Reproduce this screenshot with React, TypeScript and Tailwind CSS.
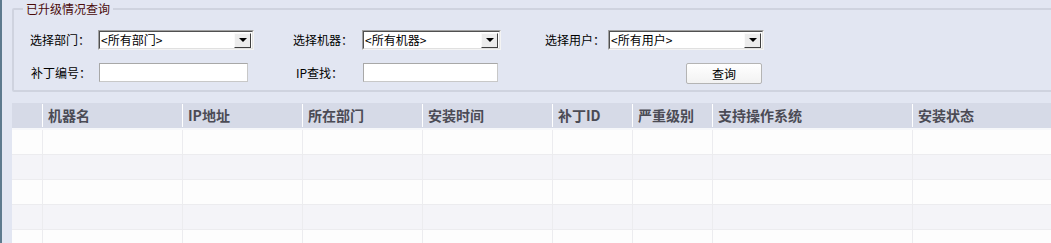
import React from "react";

const font = { fontFamily: '"Noto Sans CJK SC", "Noto Sans", sans-serif' };

function Select({ w, text }: { w: string; text: string }) {
  return (
    <div
      className={`${w} h-[20px] bg-white flex items-center border border-t-[#a0a0a0] border-l-[#a0a0a0] border-b-[#f4f4f4] border-r-[#f4f4f4]`}
    >
      <div className="flex-1 h-full flex items-center border border-t-[#505050] border-l-[#505050] border-b-[#e0e0e0] border-r-[#e0e0e0] pr-[1px]">
        <span className="flex-1 pl-[1px] text-[12px] leading-none text-black whitespace-nowrap">{text}</span>
        <div className="w-[17px] h-[15px] bg-[#ececec] flex items-center justify-center border border-t-[#fafafa] border-l-[#fafafa] border-b-[#404040] border-r-[#404040]">
          <div className="w-0 h-0 border-l-[4px] border-r-[4px] border-t-[4px] border-l-transparent border-r-transparent border-t-black" />
        </div>
      </div>
    </div>
  );
}

function Input({ w }: { w: string }) {
  return <div className={`${w} h-[19px] bg-white border border-[#a8a8a8] border-b-[#c8c8c8] border-r-[#c8c8c8]`} />;
}

const cols = ["", "机器名", "IP地址", "所在部门", "安装时间", "补丁ID", "严重级别", "支持操作系统", "安装状态"];

export default function App() {
  return (
    <div
      className="w-[1051px] h-[243px] bg-[#e2e6f2] border-l-2 border-[#5d7a8e] overflow-hidden"
      style={font}
    >
      <fieldset className="ml-[10px] w-[1045px] border-2 border-[#cfd3df] rounded-[2px] pb-[6px]">
        <legend className="ml-[9px] px-[3px] text-[12px] leading-[18px] text-[#4a0a0a]">已升级情况查询</legend>
        <div className="flex items-center mt-[12px] pl-[16px] text-[12px] text-black">
          <span className="w-[68px]">选择部门：</span>
          <Select w="w-[156px]" text="<所有部门>" />
          <span className="ml-[39px] w-[69px]">选择机器：</span>
          <Select w="w-[139px]" text="<所有机器>" />
          <span className="ml-[44px] w-[63px]">选择用户：</span>
          <Select w="w-[156px]" text="<所有用户>" />
        </div>
        <div className="flex items-start mt-[13px] pl-[16px] text-[12px] text-black">
          <span className="w-[69px] h-[19px] leading-[19px] pl-[1px]">补丁编号：</span>
          <Input w="w-[149px]" />
          <span className="ml-[48px] w-[67px] h-[19px] leading-[19px]">IP查找：</span>
          <Input w="w-[135px]" />
          <button className="ml-[188px] w-[76px] h-[21px] border border-[#b4b4b4] rounded-[2px] bg-gradient-to-b from-white to-[#f2f2f2] text-[12px] leading-none text-black">
            查询
          </button>
        </div>
      </fieldset>
      <div className="ml-[10px] mt-[11px]">
        <div className="grid grid-cols-[30px_140px_120px_120px_130px_80px_80px_200px_1fr] h-[27px] bg-[#d6dae7] border-b-2 border-[#f6f7fa]">
          {cols.map((c, i) => (
            <div
              key={i}
              className={`h-full flex items-center ${i > 0 ? "pl-[5px]" : ""}`}
            >
              {i > 0 && <div className="w-px h-[23px] bg-white mr-[5px] -ml-[5px]" />}
              <span className="text-[14px] font-semibold text-[#4b4b55] whitespace-nowrap">{c}</span>
            </div>
          ))}
        </div>
        {[0, 1, 2, 3, 4].map((r) => (
          <div
            key={r}
            className={`grid grid-cols-[30px_140px_120px_120px_130px_80px_80px_200px_1fr] h-[25px] border-b border-[#ececef] ${
              r % 2 === 0 ? "bg-[#fdfdfd]" : "bg-[#f4f4f8]"
            }`}
          >
            {cols.map((_, i) => (
              <div key={i} className={`h-full ${i > 0 ? "border-l border-[#ececef]" : ""}`} />
            ))}
          </div>
        ))}
      </div>
    </div>
  );
}
